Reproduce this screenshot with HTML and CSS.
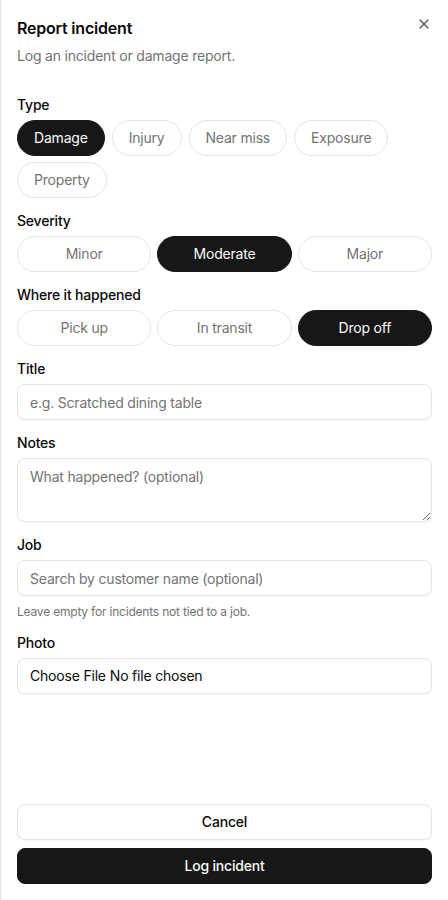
FILE: index.html
```html
<!DOCTYPE html>
<html lang="en">
<head>
<meta charset="utf-8">
<title>Report incident</title>
<link rel="stylesheet" href="styles.css">
</head>
<body>
<div class="sheet">
  <header class="head">
    <h2 class="title">Report incident</h2>
    <p class="desc">Log an incident or damage report.</p>
    <button class="close" aria-label="Close">
      <svg width="16" height="16" viewBox="0 0 24 24" fill="none" stroke="currentColor" stroke-width="2" stroke-linecap="round" stroke-linejoin="round"><path d="M18 6 6 18"/><path d="m6 6 12 12"/></svg>
    </button>
  </header>

  <form class="form">
    <div class="field">
      <label class="label">Type</label>
      <div class="chips">
        <button type="button" class="chip on">Damage</button>
        <button type="button" class="chip">Injury</button>
        <button type="button" class="chip">Near miss</button>
        <button type="button" class="chip">Exposure</button>
        <button type="button" class="chip">Property</button>
      </div>
    </div>

    <div class="field">
      <label class="label">Severity</label>
      <div class="seg">
        <button type="button" class="chip">Minor</button>
        <button type="button" class="chip on">Moderate</button>
        <button type="button" class="chip">Major</button>
      </div>
    </div>

    <div class="field">
      <label class="label">Where it happened</label>
      <div class="seg">
        <button type="button" class="chip">Pick up</button>
        <button type="button" class="chip">In transit</button>
        <button type="button" class="chip on">Drop off</button>
      </div>
    </div>

    <div class="field">
      <label class="label" for="t">Title</label>
      <input id="t" class="input" type="text" placeholder="e.g. Scratched dining table">
    </div>

    <div class="field">
      <label class="label" for="n">Notes</label>
      <textarea id="n" class="input area" placeholder="What happened? (optional)"></textarea>
    </div>

    <div class="field">
      <label class="label" for="j">Job</label>
      <input id="j" class="input" type="text" placeholder="Search by customer name (optional)">
      <p class="help">Leave empty for incidents not tied to a job.</p>
    </div>

    <div class="field">
      <label class="label" for="p">Photo</label>
      <input id="p" class="input file" type="file">
    </div>
  </form>

  <footer class="foot">
    <button type="button" class="btn outline">Cancel</button>
    <button type="button" class="btn solid">Log incident</button>
  </footer>
</div>
</body>
</html>
```

FILE: styles.css
```css
* { box-sizing: border-box; }
html, body { margin: 0; padding: 0; }
body {
  font-family: Inter, "Noto Sans", "Liberation Sans", sans-serif;
  color: #0a0a0a;
  background: #fff;
  letter-spacing: -0.2px;
}
.sheet {
  min-height: 900px;
  border-left: 1px solid #e5e5e5;
  display: flex;
  flex-direction: column;
  padding: 16px;
}
.head { position: relative; display: flex; flex-direction: column; gap: 6px; }
.title { margin: 0; font-size: 16px; line-height: 24px; font-weight: 600; }
.desc { margin: 0; font-size: 14px; line-height: 20px; color: #737373; }
.close {
  position: absolute; top: 0; right: 0;
  width: 16px; height: 16px; padding: 0;
  border: 0; background: none; color: #0a0a0a; opacity: .7;
  display: flex;
}
.form { display: flex; flex-direction: column; gap: 16px; margin-top: 32px; }
.field { display: flex; flex-direction: column; gap: 8px; }
.label { font-size: 14px; line-height: 14px; font-weight: 500; }
.chips { display: flex; flex-wrap: wrap; gap: 6px 7px; }
.seg { display: grid; grid-template-columns: repeat(3, 1fr); gap: 6px; }
.chip {
  height: 36px; padding: 0 16px;
  border: 1px solid #e5e5e5; border-radius: 999px;
  background: #fff; color: #737373;
  font: 400 14px/20px Inter, "Noto Sans", sans-serif;
  letter-spacing: -0.2px;
}
.chip.on { background: #171717; border-color: #171717; color: #fafafa; }
.input {
  width: 100%; height: 36px; padding: 0 12px;
  border: 1px solid #e5e5e5; border-radius: 8px;
  box-shadow: 0 1px 2px rgba(0,0,0,.05);
  font: 400 14px/20px Inter, "Noto Sans", sans-serif; color: #0a0a0a;
  letter-spacing: -0.2px;
  background: #fff;
}
.input::placeholder { color: #737373; }
.area { height: 64px; padding: 8px 12px; resize: vertical; display: block; }
.file { padding: 7px 12px; }
.file::file-selector-button {
  border: 0; background: transparent; padding: 0; margin: 0 4px 0 0;
  font: 400 14px/20px Inter, "Noto Sans", sans-serif; color: #0a0a0a;
  letter-spacing: -0.2px;
}
.help { margin: 0; font-size: 12px; line-height: 16px; color: #737373; }
.foot { margin-top: auto; display: flex; flex-direction: column; gap: 8px; }
.btn {
  height: 36px; border-radius: 8px;
  font: 500 14px/20px Inter, "Noto Sans", sans-serif;
  letter-spacing: -0.2px;
}
.btn.outline { background: #fff; border: 1px solid #e5e5e5; color: #0a0a0a; box-shadow: 0 1px 2px rgba(0,0,0,.05); }
.btn.solid { background: #171717; border: 1px solid #171717; color: #fafafa; }
```
